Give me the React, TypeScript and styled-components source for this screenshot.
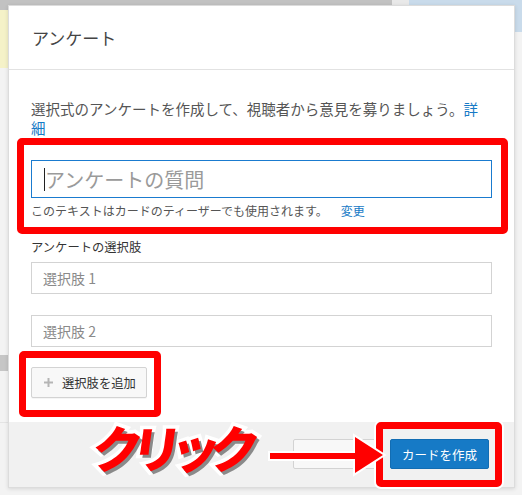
import React from "react";
import styled, { createGlobalStyle } from "styled-components";

const GlobalStyle = createGlobalStyle`
  html, body { margin: 0; padding: 0; }
  body { font-family: "Noto Sans CJK JP", "Noto Sans", "Liberation Sans", sans-serif; }
  * { box-sizing: border-box; }
`;

const Page = styled.div`
  width: 522px;
  height: 495px;
  overflow: hidden;
  padding: 5px 0 0 8px;
  background:
    linear-gradient(#c9dbeb, #c9dbeb) right 0 top 0 / 8px 32px no-repeat,
    linear-gradient(to right, #c2c2c2 0 392px, #e9e9e9 392px 409px, #c9dbeb 409px) 0 0 / 100% 5px no-repeat,
    linear-gradient(#c2c2c2, #c2c2c2) 0 0 / 8px 10px no-repeat,
    linear-gradient(#f5f2c8, #f5f2c8) 0 10px / 8px 58px no-repeat,
    linear-gradient(#c6c6c6, #c6c6c6) 0 355px / 8px 16px no-repeat,
    linear-gradient(#e4e4e4, #e4e4e4) 0 422px / 8px 1px no-repeat,
    #f3f3f3;
`;

const Dialog = styled.div`
  width: 507px;
  height: 483px;
  background: #fff;
  border: 1px solid #dcdcdc;
  box-shadow: 0 1px 4px rgba(0, 0, 0, 0.12);
  display: flex;
  flex-direction: column;
  color: #333;
`;

const Header = styled.div`
  height: 64px;
  border-bottom: 1px solid #e2e2e2;
  display: flex;
  align-items: center;
  padding-left: 23px;
`;

const Title = styled.h2`
  margin: 0;
  font-size: 17px;
  font-weight: 400;
  color: #444;
`;

const Body = styled.div`
  flex: 1;
  padding: 29px 22px 0 22px;
  display: flex;
  flex-direction: column;
  align-items: flex-start;
`;

const Description = styled.p`
  margin: 0;
  font-size: 14.5px;
  line-height: 19px;
  color: #555;
  width: 100%;
`;

const Link = styled.a`
  color: #167ac6;
  text-decoration: none;
  cursor: pointer;
`;

const Group = styled.div<{ $top: number }>`
  position: relative;
  width: 100%;
  margin-top: ${(p) => p.$top}px;
`;

const Highlight = styled.div<{ $inset: string; $outline?: boolean }>`
  position: absolute;
  inset: ${(p) => p.$inset};
  border: 7px solid #ff0000;
  border-radius: 5px;
  pointer-events: none;
  box-shadow: ${(p) => (p.$outline ? "0 0 0 2px #fff" : "none")};
`;

const QuestionField = styled.div`
  height: 38px;
  border: 1px solid #1a7bcf;
  display: flex;
  align-items: center;
  padding-left: 12px;
  font-size: 20px;
  color: #9a9a9a;
`;

const Caret = styled.span`
  display: inline-block;
  width: 1px;
  height: 23px;
  background: #222;
`;

const Hint = styled.div`
  margin-top: 5px;
  font-size: 12px;
  line-height: 16px;
  color: #555;
`;

const HintLink = styled(Link)`
  margin-left: 13px;
`;

const Label = styled.div`
  margin-top: 20px;
  font-size: 12.3px;
  line-height: 16px;
  color: #333;
`;

const ChoiceInput = styled.input<{ $top: number }>`
  display: block;
  width: 100%;
  height: 32px;
  margin: ${(p) => p.$top}px 0 0 0;
  border: 1px solid #d3d3d3;
  border-radius: 0;
  padding: 0 0 0 11px;
  font-family: inherit;
  font-size: 14px;
  color: #333;
  outline: none;
  &::placeholder { color: #8a8a8a; }
`;

const AddWrap = styled.div`
  position: relative;
  margin-top: 20px;
`;

const AddButton = styled.button`
  display: flex;
  align-items: center;
  gap: 9px;
  width: 116px;
  height: 31px;
  padding: 0 0 0 12px;
  background: #f8f8f8;
  border: 1px solid #d3d3d3;
  border-radius: 2px;
  font-family: inherit;
  font-size: 12.3px;
  color: #333;
  box-shadow: 0 1px 0 rgba(0, 0, 0, 0.04);
`;

const Footer = styled.div`
  position: relative;
  height: 65px;
  background: #f1f1f1;
  display: flex;
  justify-content: flex-end;
  align-items: flex-start;
  gap: 12px;
  padding: 17px 25px 0 0;
`;

const CancelButton = styled.button`
  width: 85px;
  height: 30px;
  background: #f8f8f8;
  border: 1px solid #d3d3d3;
  border-radius: 2px;
`;

const CreateWrap = styled.div`
  position: relative;
`;

const CreateButton = styled.button`
  width: 99px;
  height: 30px;
  background: #167ac6;
  border: 1px solid #126db3;
  border-radius: 2px;
  color: #fff;
  font-family: inherit;
  font-size: 12.5px;
`;

const ClickLabel = styled.div`
  position: absolute;
  left: 84px;
  top: -1px;
  font-family: "Noto Sans CJK JP", sans-serif;
  font-weight: 900;
  font-size: 50px;
  line-height: 1;
  letter-spacing: -11px;
  color: #ff0000;
  -webkit-text-stroke: 7px #fff;
  paint-order: stroke fill;
  text-shadow: 3px 3px 0 #8a8a8a;
  transform: skewX(-8deg);
  pointer-events: none;
`;

const Arrow = styled.svg`
  position: absolute;
  left: 257px;
  top: 11px;
  pointer-events: none;
`;

const PlusIcon = () => (
  <svg width="9" height="9" viewBox="0 0 9 9">
    <path d="M3.5 0h2v3.5H9v2H5.5V9h-2V5.5H0v-2h3.5z" fill="#b5b5b5" />
  </svg>
);

export default function App() {
  return (
    <>
      <GlobalStyle />
      <Page>
        <Dialog>
          <Header>
            <Title>アンケート</Title>
          </Header>
          <Body>
            <Description>
              選択式のアンケートを作成して、視聴者から意見を募りましょう。<Link>詳細</Link>
            </Description>
            <Group $top={23}>
              <QuestionField>
                <Caret />
                <span>アンケートの質問</span>
              </QuestionField>
              <Hint>
                このテキストはカードのティーザーでも使用されます。<HintLink>変更</HintLink>
              </Hint>
              <Highlight $inset="-22px -16px -15px -14px" />
            </Group>
            <Label>アンケートの選択肢</Label>
            <ChoiceInput $top={7} placeholder="選択肢 1" />
            <ChoiceInput $top={21} placeholder="選択肢 2" />
            <AddWrap>
              <AddButton>
                <PlusIcon />
                <span>選択肢を追加</span>
              </AddButton>
              <Highlight $inset="-16px -14px -19px -12px" />
            </AddWrap>
          </Body>
          <Footer>
            <CancelButton />
            <CreateWrap>
              <CreateButton>カードを作成</CreateButton>
              <Highlight $inset="-17px -13px -18px -14px" $outline />
            </CreateWrap>
            <ClickLabel>クリック</ClickLabel>
            <Arrow width="122" height="44" viewBox="0 0 122 44">
              <polygon
                points="4,20 89,20 89,4 117,22 89,40 89,26 4,26"
                fill="#ff0000"
                stroke="#fff"
                strokeWidth="4"
                strokeLinejoin="miter"
                paintOrder="stroke"
              />
            </Arrow>
          </Footer>
        </Dialog>
      </Page>
    </>
  );
}
